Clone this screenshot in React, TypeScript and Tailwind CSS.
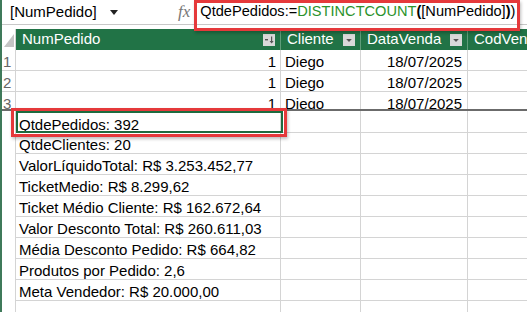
import React from "react";

const FONT = { fontFamily: '"Liberation Sans", Arial, sans-serif' };

function FilterBtn({ sorted = false }: { sorted?: boolean }) {
  return (
    <div className="w-[12px] h-[12px] bg-[#d9d9d9] flex items-center justify-center shrink-0">
      <svg width="12" height="12" viewBox="0 0 12 12">
        {sorted ? (
          <>
            <rect x="2" y="5" width="3" height="1.4" fill="#555" />
            <rect x="8" y="2.5" width="1.2" height="6" fill="#555" />
            <path d="M6.6 7 L10.6 7 L8.6 9.6 Z" fill="#555" />
          </>
        ) : (
          <path d="M3.2 5 L8.8 5 L6 8 Z" fill="#555" />
        )}
      </svg>
    </div>
  );
}

function HeaderCell({ w, label, sorted, last }: { w: string; label: string; sorted?: boolean; last?: boolean }) {
  return (
    <div className={`${w} shrink-0 h-full flex items-center justify-between pl-[6px] pr-[5px] ${last ? "" : "border-r border-[#5f9c7a]"} overflow-hidden`}>
      <span className="text-white text-[15px] whitespace-nowrap">{label}</span>
      {!last && <FilterBtn sorted={sorted} />}
    </div>
  );
}

function DataRow({ n, h = "h-[21px]", clip = false }: { n: string; h?: string; clip?: boolean }) {
  return (
    <div className={`flex shrink-0 ${h} overflow-hidden ${clip ? "" : "border-b border-[#d4d4d4]"}`}>
      <div className="w-[14px] shrink-0 border-r border-[#d4d4d4] text-[#666] text-[15px] leading-[20px] pt-[2px] pl-[1px] h-[21px]">{n}</div>
      <div className="w-[265px] shrink-0 border-r border-[#d4d4d4] text-right pr-[4px] text-[15px] leading-[20px] pt-[2px] h-[21px]">1</div>
      <div className="w-[80px] shrink-0 border-r border-[#d4d4d4] pl-[4px] text-[15px] leading-[20px] pt-[2px] h-[21px]">Diego</div>
      <div className="w-[107px] shrink-0 border-r border-[#d4d4d4] text-right pr-[5px] text-[15px] leading-[20px] pt-[2px] h-[21px]">18/07/2025</div>
      <div className="flex-1" />
    </div>
  );
}

function SumRow({ text, h = "h-[21px]", pt = "pt-[3px]" }: { text: string; h?: string; pt?: string }) {
  return (
    <div className={`flex shrink-0 ${h}`}>
      <div className="w-[14px] shrink-0 border-r border-[#d4d4d4]" />
      <div className="flex-1 flex border-b border-[#d4d4d4] overflow-hidden">
        <div className={`w-[265px] shrink-0 border-r border-[#d4d4d4] pl-[3px] text-[15px] leading-[17px] ${pt} whitespace-nowrap`}>{text}</div>
        <div className="w-[80px] shrink-0 border-r border-[#d4d4d4]" />
        <div className="w-[107px] shrink-0 border-r border-[#d4d4d4]" />
        <div className="flex-1" />
      </div>
    </div>
  );
}

export default function App() {
  const sums = [
    "QtdeClientes: 20",
    "ValorLíquidoTotal: R$ 3.253.452,77",
    "TicketMedio: R$ 8.299,62",
    "Ticket Médio Cliente: R$ 162.672,64",
    "Valor Desconto Total: R$ 260.611,03",
    "Média Desconto Pedido: R$ 664,82",
    "Produtos por Pedido: 2,6",
    "Meta Vendedor: R$ 20.000,00",
    "",
  ];
  return (
    <div className="relative w-[527px] h-[312px] overflow-hidden bg-white text-black" style={FONT}>
      <div className="h-full border-l-2 border-[#3f7a5a] flex flex-col">
        {/* formula bar */}
        <div className="h-[25px] shrink-0 flex items-center border-b border-[#c8c8c8]">
          <span className="ml-[8px] text-[15px] w-[92px]">[NumPedido]</span>
          <svg width="8" height="5" viewBox="0 0 8 5" className="ml-[8px]">
            <path d="M0 0 L8 0 L4 5 Z" fill="#222" />
          </svg>
          <span className="ml-[60px] text-[17px] italic text-[#777]" style={{ fontFamily: '"Liberation Serif", serif' }}>fx</span>
          <span className="ml-[10px] text-[14.6px] whitespace-nowrap">
            QtdePedidos:=<span className="text-[#2b922b]">DISTINCTCOUNT</span>
            <span className="font-bold">(</span>[NumPedido]<span className="font-bold">)</span>)
          </span>
        </div>
        <div className="h-[4px] shrink-0" />
        {/* header */}
        <div className="h-[21px] shrink-0 flex">
          <div className="w-[14px] shrink-0 h-full flex items-end justify-end pb-[3px] pr-[1px] border-r border-[#d4d4d4]">
            <svg width="10" height="13" viewBox="0 0 10 13">
              <path d="M10 0 L10 13 L0 13 Z" fill="#c4c4c4" />
            </svg>
          </div>
          <div className="flex-1 flex bg-[#217346] h-full">
            <HeaderCell w="w-[265px]" label="NumPedido" sorted />
            <HeaderCell w="w-[80px]" label="Cliente" />
            <HeaderCell w="w-[107px]" label="DataVenda" />
            <HeaderCell w="flex-1" label="CodVendedor" last />
          </div>
        </div>
        <DataRow n="1" />
        <DataRow n="2" />
        <DataRow n="3" h="h-[17px]" clip />
        <div className="h-[2px] shrink-0 bg-[#6b6b6b]" />
        <SumRow text="QtdePedidos: 392" h="h-[22px]" pt="pt-[5px]" />
        {sums.map((s, i) => (
          <SumRow key={i} text={s} />
        ))}
      </div>
      {/* annotations */}
      <div className="absolute left-[194px] top-0 w-[326px] h-[31px] border-[3px] border-[#e5393b] shadow-[1px_2px_3px_rgba(0,0,0,0.25)]" />
      <div className="absolute left-[16px] top-[111px] w-[267px] h-[22px] border-2 border-[#1d6b3f]" />
      <div className="absolute left-[11px] top-[108px] w-[276px] h-[29px] border-[3px] border-[#e5393b] shadow-[1px_2px_3px_rgba(0,0,0,0.25)]" />
    </div>
  );
}
